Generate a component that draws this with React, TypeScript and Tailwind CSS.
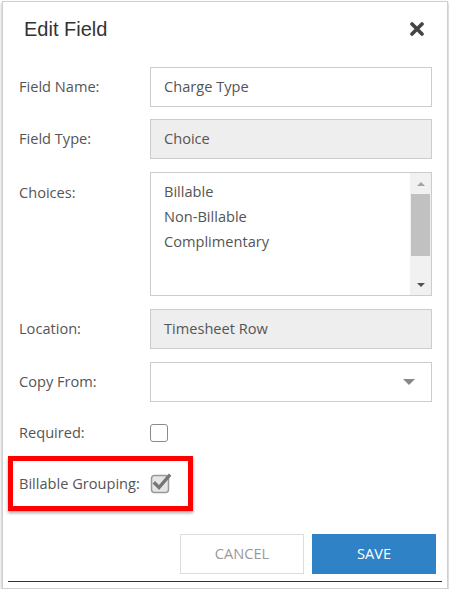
const labelCls = "w-[147px] shrink-0 pl-4 text-[14.6px] text-[#555]"

function CloseIcon() {
  return (
    <svg width="14" height="14" viewBox="0 0 14 14" className="block">
      <path d="M2 2 L12 12 M12 2 L2 12" stroke="#444" strokeWidth="3.6" strokeLinecap="round" />
    </svg>
  )
}

function CheckedBox() {
  return (
    <svg width="22" height="22" viewBox="0 0 22 22" className="block">
      <rect x="1.5" y="3.5" width="17" height="17" rx="3" fill="#e6e6e6" stroke="#999" strokeWidth="1.5" />
      <path d="M5 11.5 L9 15.5 L19 4" fill="none" stroke="#777" strokeWidth="3.4" strokeLinecap="square" />
    </svg>
  )
}

export default function App() {
  return (
    <div className="bg-white pt-[1px] pl-[2px]" style={{ fontFamily: "'Open Sans', sans-serif" }}>
      <div className="relative w-[446px] h-[588px] border border-[#cfcfcf] bg-white shadow-[0_2px_3px_rgba(0,0,0,0.35)]">
        {/* Header */}
        <div className="flex items-center justify-between h-[54px] pl-[21px] pr-[23px]">
          <h2 className="text-[20px] text-[#333]" style={{ fontFamily: "'Liberation Sans', Arial, sans-serif" }}>
            Edit Field
          </h2>
          <CloseIcon />
        </div>

        {/* Body */}
        <div className="flex flex-col pr-[15px]">
          <div className="flex items-center mt-[11px]">
            <label className={labelCls}>Field Name:</label>
            <div className="flex-1 h-[40px] border border-[#ccc] px-[13px] flex items-center text-[14.6px] text-[#555]">
              Charge Type
            </div>
          </div>

          <div className="flex items-center mt-[12px]">
            <label className={labelCls}>Field Type:</label>
            <div className="flex-1 h-[40px] border border-[#ccc] bg-[#eee] px-[13px] flex items-center text-[14.6px] text-[#555]">
              Choice
            </div>
          </div>

          <div className="flex items-start mt-[13px]">
            <label className={labelCls + " pt-[10px]"}>Choices:</label>
            <div className="flex-1 h-[124px] border border-[#ccc] flex">
              <div className="flex-1 pl-[13px] pt-[6px] text-[14.6px] leading-[25px] text-[#555]">
                <div>Billable</div>
                <div>Non-Billable</div>
                <div>Complimentary</div>
              </div>
              <div className="w-[21px] bg-[#f1f1f1] flex flex-col items-center">
                <div className="h-[21px] flex items-center justify-center">
                  <div className="w-0 h-0 border-l-[4px] border-r-[4px] border-b-[4px] border-l-transparent border-r-transparent border-b-[#a3a3a3]" />
                </div>
                <div className="w-[19px] h-[62px] bg-[#c1c1c1]" />
                <div className="flex-1" />
                <div className="h-[21px] flex items-center justify-center">
                  <div className="w-0 h-0 border-l-[4px] border-r-[4px] border-t-[4px] border-l-transparent border-r-transparent border-t-[#505050]" />
                </div>
              </div>
            </div>
          </div>

          <div className="flex items-center mt-[13px]">
            <label className={labelCls}>Location:</label>
            <div className="flex-1 h-[40px] border border-[#ccc] bg-[#eee] px-[13px] flex items-center text-[14.6px] text-[#555]">
              Timesheet Row
            </div>
          </div>

          <div className="flex items-center mt-[13px]">
            <label className={labelCls}>Copy From:</label>
            <div className="flex-1 h-[40px] border border-[#ccc] flex items-center justify-end pr-[16px]">
              <div className="w-0 h-0 border-l-[6px] border-r-[6px] border-t-[6px] border-l-transparent border-r-transparent border-t-[#888]" />
            </div>
          </div>

          <div className="flex items-center mt-[21px] h-[20px]">
            <label className={labelCls}>Required:</label>
            <div className="w-[18px] h-[18px] rounded-[3px] border-[1.5px] border-[#8a8a8a] bg-white" />
          </div>

          <div className="relative flex items-center mt-[31px] h-[20px]">
            <label className={labelCls}>Billable Grouping:</label>
            <div className="-mt-[3px]">
              <CheckedBox />
            </div>
            <div className="absolute left-[5px] top-[-18px] w-[185px] h-[55px] border-[5px] border-[#ff0000] shadow-[0_2px_3px_rgba(0,0,0,0.35)]" />
          </div>
        </div>

        {/* Footer */}
        <div className="flex justify-end gap-[8px] mt-[40px] pr-[11px]">
          <button className="w-[124px] h-[40px] border border-[#ddd] bg-white text-[14.6px] text-[#999]">CANCEL</button>
          <button className="w-[124px] h-[40px] bg-[#2f82c5] text-[14.6px] text-white">SAVE</button>
        </div>
        <div className="mx-[5px] mt-[7px] h-[1px] bg-[#333]" />
      </div>
    </div>
  )
}
